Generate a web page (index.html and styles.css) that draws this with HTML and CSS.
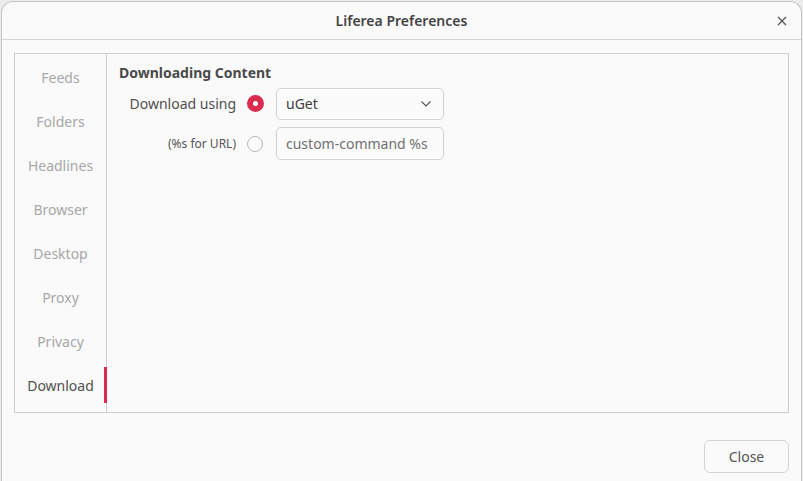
FILE: index.html
```html
<!DOCTYPE html>
<html>
<head>
<meta charset="utf-8">
<link rel="stylesheet" href="styles.css">
</head>
<body>
<div class="window">
  <div class="titlebar">
    <span class="title">Liferea Preferences</span>
    <span class="close-x">
      <svg width="10" height="10" viewBox="0 0 10 10"><path d="M1 1 L9 9 M9 1 L1 9" stroke="#555" stroke-width="1.3" fill="none"/></svg>
    </span>
  </div>
  <div class="body">
    <div class="frame">
      <div class="sidebar">
        <div class="item">Feeds</div>
        <div class="item">Folders</div>
        <div class="item">Headlines</div>
        <div class="item">Browser</div>
        <div class="item">Desktop</div>
        <div class="item">Proxy</div>
        <div class="item">Privacy</div>
        <div class="item active">Download</div>
      </div>
      <div class="main">
        <div class="heading">Downloading Content</div>
        <div class="grid">
          <div class="label">Download using</div>
          <div class="radio checked"></div>
          <div class="combo"><span>uGet</span>
            <svg width="12" height="8" viewBox="0 0 12 8"><path d="M1.5 1.5 L6 6 L10.5 1.5" stroke="#555" stroke-width="1.2" fill="none"/></svg>
          </div>
          <div class="label small">(%s for URL)</div>
          <div class="radio"></div>
          <div class="entry">custom-command %s</div>
        </div>
      </div>
    </div>
    <div class="actions">
      <div class="btn">Close</div>
    </div>
  </div>
</div>
</body>
</html>
```

FILE: styles.css
```css
html, body {
  margin: 0;
  padding: 0;
}
body {
  background: #ececec;
  width: 803px;
  height: 481px;
  overflow: hidden;
  font-family: "Noto Sans", "DejaVu Sans", sans-serif;
  font-size: 14px;
  color: #3d3d3d;
}
.window {
  margin: 1px 1px 0 1px;
  height: 500px;
  background: #fafafa;
  border: 1px solid #c4c4c4;
  border-bottom: none;
  border-radius: 12px 12px 0 0;
  box-sizing: border-box;
}
.titlebar {
  height: 37px;
  border-bottom: 1px solid #d4d4d4;
  display: flex;
  align-items: center;
  justify-content: center;
  position: relative;
}
.title {
  font-weight: 600;
  font-size: 14px;
  color: #444;
}
.close-x {
  position: absolute;
  right: 14px;
  top: 14px;
  width: 10px;
  height: 10px;
  display: flex;
}
.body {
  padding: 13px 12px 0 12px;
}
.frame {
  height: 360px;
  border: 1px solid #cdcdcd;
  box-sizing: border-box;
  display: flex;
}
.sidebar {
  width: 92px;
  border-right: 1px solid #cdcdcd;
  padding-top: 5px;
  display: flex;
  flex-direction: column;
  gap: 8px;
  box-sizing: border-box;
}
.item {
  height: 36px;
  display: flex;
  align-items: center;
  justify-content: center;
  color: #a7a7a7;
  position: relative;
}
.item.active {
  color: #505050;
}
.item.active::after {
  content: "";
  position: absolute;
  right: -1px;
  top: 0;
  width: 3px;
  height: 36px;
  background: #da2c4f;
}
.main {
  flex: 1;
  padding: 9px 12px 0 12px;
}
.heading {
  font-weight: 700;
  font-size: 14px;
  color: #4a4a4a;
  line-height: 20px;
}
.grid {
  margin-top: 4px;
  display: grid;
  grid-template-columns: 117px 40px 168px;
  grid-auto-rows: 33px;
  row-gap: 7px;
  align-items: center;
}
.label {
  text-align: right;
  color: #505050;
}
.label.small {
  font-size: 12px;
  color: #555;
}
.radio {
  justify-self: start;
  margin-left: 11px;
  width: 16px;
  height: 16px;
  border: 1px solid #b8b8b8;
  border-radius: 50%;
  box-sizing: border-box;
  background: #fcfcfc;
}
.radio.checked {
  border: 6px solid #da2c4f;
  background: #fff;
  width: 17px;
  height: 17px;
}
.combo, .entry {
  height: 33px;
  border: 1px solid #d2d2d2;
  border-radius: 5px;
  box-sizing: border-box;
  background: #fbfbfb;
  display: flex;
  align-items: center;
  padding: 0 11px 0 9px;
}
.combo {
  justify-content: space-between;
  height: 32px;
  color: #3d3d3d;
}
.entry {
  color: #707070;
}
.actions {
  display: flex;
  justify-content: flex-end;
  padding-top: 27px;
}
.btn {
  width: 85px;
  height: 33px;
  border: 1px solid #d4d4d4;
  border-radius: 6px;
  box-sizing: border-box;
  display: flex;
  align-items: center;
  justify-content: center;
  color: #555;
  background: #fafafa;
}
```
